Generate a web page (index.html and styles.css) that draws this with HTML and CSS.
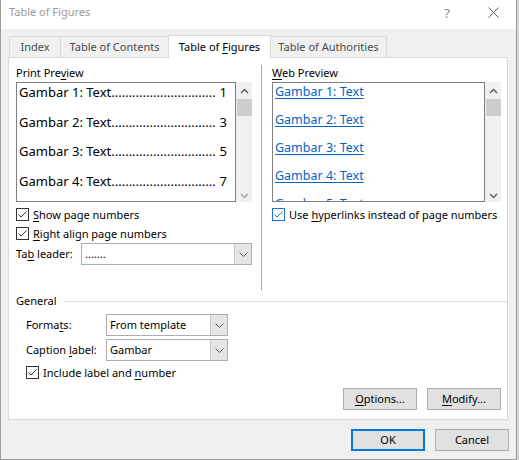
FILE: index.html
```html
<!DOCTYPE html>
<html>
<head>
<meta charset="utf-8">
<title>Table of Figures</title>
<link rel="stylesheet" href="styles.css">
</head>
<body>
<div class="window">
  <div class="titlebar">
    <span class="title">Table of Figures</span>
    <span class="tb-btn help">?</span>
    <span class="tb-btn close"><svg width="11" height="11" viewBox="0 0 11 11"><path d="M0.5 0.5L10.5 10.5M10.5 0.5L0.5 10.5" stroke="#5f5f5f" stroke-width="1" fill="none"/></svg></span>
  </div>
  <div class="client">
    <div class="tabs">
      <div class="tab t-index"><span>Index</span></div>
      <div class="tab t-toc"><span>Table of Contents</span></div>
      <div class="tab t-tof active"><span>Table of <u>F</u>igures</span></div>
      <div class="tab t-toa"><span>Table of Authorities</span></div>
    </div>
    <div class="panel">
      <div class="top">
        <div class="col left">
          <div class="label">Print Pre<u>v</u>iew</div>
          <div class="frame">
            <div class="preview print">
              <div class="entry"><span>Gambar 1: Text..............................</span><span class="num">1</span></div>
              <div class="entry"><span>Gambar 2: Text..............................</span><span class="num">3</span></div>
              <div class="entry"><span>Gambar 3: Text..............................</span><span class="num">5</span></div>
              <div class="entry"><span>Gambar 4: Text..............................</span><span class="num">7</span></div>
            </div>
            <div class="scrollbar">
              <div class="sb-btn up"><svg width="9" height="6" viewBox="0 0 9 6"><path d="M1 5L4.5 1.5L8 5" stroke="#606060" stroke-width="1.5" fill="none"/></svg></div>
              <div class="thumb"></div>
              <div class="sb-space"></div>
              <div class="sb-btn down"><svg width="9" height="6" viewBox="0 0 9 6"><path d="M1 1L4.5 4.5L8 1" stroke="#a6a6a6" stroke-width="1.5" fill="none"/></svg></div>
            </div>
          </div>
          <div class="check first">
            <svg class="cb" width="13" height="13" viewBox="0 0 13 13"><rect x="0.5" y="0.5" width="12" height="12" fill="#fff" stroke="#333"/><path d="M2.5 6.5L5 9L10.5 3.5" fill="none" stroke="#333" stroke-width="1"/></svg>
            <span><u>S</u>how page numbers</span>
          </div>
          <div class="check">
            <svg class="cb" width="13" height="13" viewBox="0 0 13 13"><rect x="0.5" y="0.5" width="12" height="12" fill="#fff" stroke="#333"/><path d="M2.5 6.5L5 9L10.5 3.5" fill="none" stroke="#333" stroke-width="1"/></svg>
            <span><u>R</u>ight align page numbers</span>
          </div>
          <div class="field">
            <span class="field-label">Ta<u>b</u> leader:</span>
            <div class="combo leader-combo">
              <span class="val">.......</span>
              <span class="drop"><svg width="9" height="5" viewBox="0 0 9 5"><path d="M0.5 0.5L4.5 4.5L8.5 0.5" stroke="#606060" stroke-width="1" fill="none"/></svg></span>
            </div>
          </div>
        </div>
        <div class="sep"></div>
        <div class="col right">
          <div class="label"><u>W</u>eb Preview</div>
          <div class="frame">
            <div class="preview web">
              <div class="link">Gambar 1: Text</div>
              <div class="link">Gambar 2: Text</div>
              <div class="link">Gambar 3: Text</div>
              <div class="link">Gambar 4: Text</div>
              <div class="link last">Gambar 5: Text</div>
            </div>
            <div class="scrollbar">
              <div class="sb-btn up"><svg width="9" height="6" viewBox="0 0 9 6"><path d="M1 5L4.5 1.5L8 5" stroke="#606060" stroke-width="1.5" fill="none"/></svg></div>
              <div class="thumb"></div>
              <div class="sb-space"></div>
              <div class="sb-btn down"><svg width="9" height="6" viewBox="0 0 9 6"><path d="M1 1L4.5 4.5L8 1" stroke="#606060" stroke-width="1.5" fill="none"/></svg></div>
            </div>
          </div>
          <div class="check first">
            <svg class="cb" width="13" height="13" viewBox="0 0 13 13"><rect x="0.5" y="0.5" width="12" height="12" fill="#fff" stroke="#1a73d0"/><path d="M2.5 6.5L5 9L10.5 3.5" fill="none" stroke="#1a73d0" stroke-width="1"/></svg>
            <span>Use <u>h</u>yperlinks instead of page numbers</span>
          </div>
        </div>
      </div>
      <div class="group-head"><span>General</span><span class="rule"></span></div>
      <div class="general">
        <div class="frow first">
          <span class="frow-label">Forma<u>t</u>s:</span>
          <div class="combo small-combo">
            <span class="val">From template</span>
            <span class="drop"><svg width="9" height="5" viewBox="0 0 9 5"><path d="M0.5 0.5L4.5 4.5L8.5 0.5" stroke="#606060" stroke-width="1" fill="none"/></svg></span>
          </div>
        </div>
        <div class="frow">
          <span class="frow-label">Caption <u>l</u>abel:</span>
          <div class="combo small-combo">
            <span class="val">Gambar</span>
            <span class="drop"><svg width="9" height="5" viewBox="0 0 9 5"><path d="M0.5 0.5L4.5 4.5L8.5 0.5" stroke="#606060" stroke-width="1" fill="none"/></svg></span>
          </div>
        </div>
        <div class="check include">
          <svg class="cb" width="13" height="13" viewBox="0 0 13 13"><rect x="0.5" y="0.5" width="12" height="12" fill="#fff" stroke="#333"/><path d="M2.5 6.5L5 9L10.5 3.5" fill="none" stroke="#333" stroke-width="1"/></svg>
          <span>Include label and <u>n</u>umber</span>
        </div>
      </div>
      <div class="actions">
        <div class="btn"><span><u>O</u>ptions...</span></div>
        <div class="btn"><span><u>M</u>odify...</span></div>
      </div>
    </div>
    <div class="footer">
      <div class="btn default">OK</div>
      <div class="btn">Cancel</div>
    </div>
  </div>
</div>
</body>
</html>
```

FILE: styles.css
```css
* {
  box-sizing: border-box;
}

body {
  margin: 0;
  width: 519px;
  height: 460px;
  overflow: hidden;
  background: #d6d6d6;
  font-family: "Noto Sans", "DejaVu Sans", sans-serif;
  font-size: 11px;
  line-height: 16px;
  color: #000;
}

u {
  text-decoration-thickness: 1px;
  text-underline-offset: 2px;
}

.window {
  width: 517px;
  height: 460px;
  border-left: 1px solid #9a9a9a;
  border-right: 1px solid #9a9a9a;
  border-bottom: 1px solid #9a9a9a;
  background: #f0f0f0;
  display: flex;
  flex-direction: column;
}

/* title bar */
.titlebar {
  height: 29px;
  background: #fff;
  display: flex;
  align-items: flex-start;
}

.title {
  flex: 1;
  padding: 4px 0 0 8px;
  color: #999;
}

.tb-btn {
  width: 46px;
  height: 25px;
  display: flex;
  align-items: center;
  justify-content: center;
}

.help {
  color: #8a8a8a;
  font-size: 13px;
}

.close svg {
  display: block;
}

/* client area */
.client {
  flex: 1;
  padding: 6px 7px 0 7px;
}

.tabs {
  display: flex;
  align-items: flex-end;
  height: 22px;
  padding-left: 1px;
}

.tab {
  height: 21px;
  border: 1px solid #d9d9d9;
  border-bottom: 0;
  background: #f0f0f0;
  color: #4a4a4a;
  display: flex;
  align-items: center;
  justify-content: center;
  margin-left: -1px;
  white-space: nowrap;
}

.t-index {
  width: 52px;
  margin-left: 0;
}

.t-toc {
  width: 109px;
}

.t-tof {
  width: 103px;
}

.t-toa {
  width: 117px;
}

.tab.active {
  height: 23px;
  margin-bottom: -1px;
  background: #fff;
  color: #000;
  position: relative;
  z-index: 1;
}

.panel {
  width: 500px;
  height: 363px;
  border: 1px solid #d9d9d9;
  background: #fff;
  padding: 7px 5px 0 7px;
}

.top {
  display: flex;
  height: 225px;
}

.col.left {
  width: 236px;
}

.col.right {
  width: 229px;
}

.sep {
  width: 1px;
  background: #a9a9a9;
  margin: 0 10px 0 9px;
}

.label {
  height: 16px;
  margin-bottom: 1px;
}

.frame {
  display: flex;
  height: 120px;
}

.preview {
  flex: 1;
  border: 1px solid #7f7f7f;
  overflow: hidden;
  background: #fff;
}

.preview.print {
  padding: 0 8px 0 2px;
  font-size: 13px;
}

.entry {
  display: flex;
  line-height: 18px;
  height: 18px;
  margin-bottom: 11.5px;
  white-space: nowrap;
}

.num {
  margin-left: auto;
}

.preview.web {
  padding: 0 2px;
  font-size: 12.5px;
}

.link {
  line-height: 17px;
  height: 17px;
  margin-bottom: 11px;
  color: #0563c1;
  text-decoration: underline;
  text-decoration-thickness: 1px;
  text-underline-offset: 2px;
  white-space: nowrap;
}

.link.last {
  height: 7px;
  margin-bottom: 0;
  overflow: hidden;
}

.scrollbar {
  width: 16px;
  background: #f0f0f0;
  display: flex;
  flex-direction: column;
}

.sb-btn {
  display: flex;
  align-items: center;
  justify-content: center;
}

.sb-btn svg {
  display: block;
}

.sb-btn.up {
  height: 17px;
}

.sb-btn.down {
  height: 12px;
}

.thumb {
  height: 17px;
  margin-left: 1px;
  background: #cdcdcd;
}

.sb-space {
  flex: 1;
}

/* checkboxes */
.check {
  display: flex;
  align-items: center;
  gap: 4px;
  height: 17px;
  margin-top: 2px;
  white-space: nowrap;
}

.check.first {
  margin-top: 4px;
}

.cb {
  display: block;
  flex: none;
}

/* combos */
.field {
  display: flex;
  align-items: center;
  margin-top: 1px;
}

.field-label {
  width: 65px;
}

.combo {
  height: 22px;
  border: 1px solid #adadad;
  background: #fff;
  display: flex;
}

.leader-combo {
  width: 171px;
}

.small-combo {
  width: 122px;
}

.combo .val {
  flex: 1;
  padding-left: 3px;
  line-height: 20px;
  white-space: nowrap;
}

.combo .drop {
  width: 17px;
  background: #e5e5e5;
  border-left: 1px solid #c8c8c8;
  display: flex;
  align-items: center;
  justify-content: center;
}

.drop svg {
  display: block;
}

/* general group */
.group-head {
  display: flex;
  align-items: center;
  height: 16px;
  margin-top: 3px;
  margin-right: -5px;
}

.rule {
  flex: 1;
  height: 1px;
  background: #dcdcdc;
  margin-left: 6px;
}

.general {
  padding-left: 10px;
}

.frow {
  display: flex;
  align-items: center;
  margin-top: 3px;
}

.frow.first {
  margin-top: 5px;
}

.frow-label {
  width: 80px;
}

.check.include {
  margin-top: 3px;
}

/* buttons */
.actions {
  display: flex;
  justify-content: flex-end;
  gap: 10px;
  margin-top: 7px;
  margin-right: 1px;
}

.btn {
  width: 74px;
  height: 22px;
  border: 1px solid #adadad;
  background: #e1e1e1;
  display: flex;
  align-items: center;
  justify-content: center;
  white-space: nowrap;
}

.btn.default {
  border: 2px solid #0078d7;
}

.footer {
  display: flex;
  justify-content: flex-end;
  gap: 10px;
  margin-top: 9px;
}
```
